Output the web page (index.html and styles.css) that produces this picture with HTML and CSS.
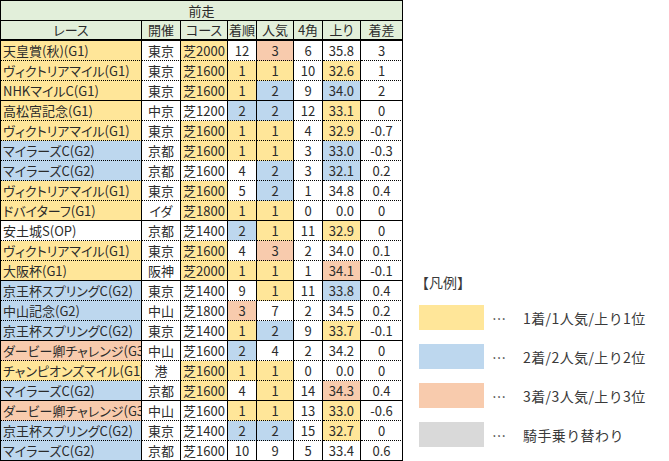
FILE: index.html
```html
<!DOCTYPE html>
<html lang="ja">
<head>
<meta charset="utf-8">
<title>前走</title>
<link rel="stylesheet" href="styles.css">
</head>
<body>
<div class="tbl">
  <div class="hrow1"><div class="cell">前走</div></div>
  <div class="row hrow2">
    <div class="cell">レース</div><div class="cell">開催</div><div class="cell">コース</div><div class="cell">着順</div><div class="cell">人気</div><div class="cell">4角</div><div class="cell">上り</div><div class="cell">着差</div>
  </div>

  <div class="row"><div class="cell race y">天皇賞(秋)(G1)</div><div class="cell">東京</div><div class="cell course y">芝2000</div><div class="cell">12</div><div class="cell o">3</div><div class="cell">6</div><div class="cell agari">35.8</div><div class="cell">3</div></div>
  <div class="row"><div class="cell race y">ヴィクトリアマイル(G1)</div><div class="cell">東京</div><div class="cell course y">芝1600</div><div class="cell y">1</div><div class="cell y">1</div><div class="cell">10</div><div class="cell agari y">32.6</div><div class="cell">1</div></div>
  <div class="row end"><div class="cell race y">NHKマイルC(G1)</div><div class="cell">東京</div><div class="cell course y">芝1600</div><div class="cell y">1</div><div class="cell b">2</div><div class="cell">9</div><div class="cell agari b">34.0</div><div class="cell">2</div></div>

  <div class="row"><div class="cell race y">高松宮記念(G1)</div><div class="cell">中京</div><div class="cell course">芝1200</div><div class="cell b">2</div><div class="cell b">2</div><div class="cell">12</div><div class="cell agari y">33.1</div><div class="cell">0</div></div>
  <div class="row"><div class="cell race y">ヴィクトリアマイル(G1)</div><div class="cell">東京</div><div class="cell course y">芝1600</div><div class="cell y">1</div><div class="cell y">1</div><div class="cell">4</div><div class="cell agari y">32.9</div><div class="cell">-0.7</div></div>
  <div class="row"><div class="cell race b">マイラーズC(G2)</div><div class="cell">京都</div><div class="cell course y">芝1600</div><div class="cell y">1</div><div class="cell y">1</div><div class="cell">3</div><div class="cell agari b">33.0</div><div class="cell">-0.3</div></div>
  <div class="row"><div class="cell race b">マイラーズC(G2)</div><div class="cell">京都</div><div class="cell course">芝1600</div><div class="cell">4</div><div class="cell b">2</div><div class="cell">3</div><div class="cell agari b">32.1</div><div class="cell">0.2</div></div>
  <div class="row"><div class="cell race y">ヴィクトリアマイル(G1)</div><div class="cell">東京</div><div class="cell course y">芝1600</div><div class="cell">5</div><div class="cell b">2</div><div class="cell">1</div><div class="cell agari">34.8</div><div class="cell">0.4</div></div>
  <div class="row end"><div class="cell race y">ドバイターフ(G1)</div><div class="cell">イダ</div><div class="cell course y">芝1800</div><div class="cell y">1</div><div class="cell y">1</div><div class="cell">0</div><div class="cell agari">0.0</div><div class="cell">0</div></div>

  <div class="row"><div class="cell race">安土城S(OP)</div><div class="cell">京都</div><div class="cell course">芝1400</div><div class="cell b">2</div><div class="cell y">1</div><div class="cell">11</div><div class="cell agari y">32.9</div><div class="cell">0</div></div>
  <div class="row"><div class="cell race y">ヴィクトリアマイル(G1)</div><div class="cell">東京</div><div class="cell course y">芝1600</div><div class="cell">4</div><div class="cell o">3</div><div class="cell">2</div><div class="cell agari">34.0</div><div class="cell">0.1</div></div>
  <div class="row end"><div class="cell race y">大阪杯(G1)</div><div class="cell">阪神</div><div class="cell course y">芝2000</div><div class="cell y">1</div><div class="cell y">1</div><div class="cell">1</div><div class="cell agari o">34.1</div><div class="cell">-0.1</div></div>

  <div class="row"><div class="cell race b">京王杯スプリングC(G2)</div><div class="cell">東京</div><div class="cell course">芝1400</div><div class="cell">9</div><div class="cell y">1</div><div class="cell">11</div><div class="cell agari b">33.8</div><div class="cell">0.4</div></div>
  <div class="row"><div class="cell race b">中山記念(G2)</div><div class="cell">中山</div><div class="cell course">芝1800</div><div class="cell o">3</div><div class="cell">7</div><div class="cell">2</div><div class="cell agari">34.5</div><div class="cell">0.2</div></div>
  <div class="row end"><div class="cell race b">京王杯スプリングC(G2)</div><div class="cell">東京</div><div class="cell course">芝1400</div><div class="cell y">1</div><div class="cell b">2</div><div class="cell">9</div><div class="cell agari y">33.7</div><div class="cell">-0.1</div></div>

  <div class="row"><div class="cell race o">ダービー卿チャレンジ(G3)</div><div class="cell">中山</div><div class="cell course">芝1600</div><div class="cell b">2</div><div class="cell">4</div><div class="cell">2</div><div class="cell agari">34.2</div><div class="cell">0</div></div>
  <div class="row"><div class="cell race y">チャンピオンズマイル(G1)</div><div class="cell">港</div><div class="cell course y">芝1600</div><div class="cell y">1</div><div class="cell y">1</div><div class="cell">0</div><div class="cell agari">0.0</div><div class="cell">0</div></div>
  <div class="row end"><div class="cell race b">マイラーズC(G2)</div><div class="cell">京都</div><div class="cell course y">芝1600</div><div class="cell">4</div><div class="cell y">1</div><div class="cell">14</div><div class="cell agari o">34.3</div><div class="cell">0.4</div></div>

  <div class="row"><div class="cell race o">ダービー卿チャレンジ(G3)</div><div class="cell">中山</div><div class="cell course">芝1600</div><div class="cell y">1</div><div class="cell y">1</div><div class="cell">13</div><div class="cell agari y">33.0</div><div class="cell">-0.6</div></div>
  <div class="row"><div class="cell race b">京王杯スプリングC(G2)</div><div class="cell">東京</div><div class="cell course">芝1400</div><div class="cell b">2</div><div class="cell b">2</div><div class="cell">15</div><div class="cell agari y">32.7</div><div class="cell">0</div></div>
  <div class="row end"><div class="cell race b">マイラーズC(G2)</div><div class="cell">京都</div><div class="cell course">芝1600</div><div class="cell">10</div><div class="cell">9</div><div class="cell">5</div><div class="cell agari">33.4</div><div class="cell">0.6</div></div>
</div>

<div class="legend">
  <div class="legend-title">【凡例】</div>
  <div class="item"><span class="swatch y"></span><span class="dots">…</span><span class="label">1着/1人気/上り1位</span></div>
  <div class="item"><span class="swatch b"></span><span class="dots">…</span><span class="label">2着/2人気/上り2位</span></div>
  <div class="item"><span class="swatch o"></span><span class="dots">…</span><span class="label">3着/3人気/上り3位</span></div>
  <div class="item"><span class="swatch g"></span><span class="dots">…</span><span class="label">騎手乗り替わり</span></div>
</div>
</body>
</html>
```
FILE: styles.css
```css
html, body {
  margin: 0;
  padding: 0;
  background: #ffffff;
}

body {
  display: flex;
  align-items: flex-start;
  font-family: "Noto Sans CJK JP", sans-serif;
  color: #2b2b2b;
}

.tbl {
  width: 403px;
  box-sizing: border-box;
  border-left: 1px solid #000;
  border-top: 1px solid #000;
  font-size: 13px;
  font-feature-settings: "palt";
}

.row {
  display: grid;
  grid-template-columns: 141px 39px 47px 29px 37px 29px 38px 42px;
}

.cell {
  box-sizing: border-box;
  height: 20px;
  line-height: 19px;
  border-right: 1px solid #000;
  border-bottom: 1px dotted #000;
  text-align: center;
  white-space: nowrap;
  overflow: hidden;
  background: #ffffff;
}

.row.end .cell {
  border-bottom: 1px solid #000;
}

.hrow1 .cell {
  border-bottom: 1px solid #000;
  background: #e2efda;
}

.hrow2 .cell {
  border-bottom: 2px solid #000;
  line-height: 18px;
  background: #e2efda;
}

.cell.race {
  text-align: left;
  padding-left: 2px;
}

.cell.course {
  text-align: left;
  padding-left: 2px;
}

.cell.agari {
  text-align: right;
  padding-right: 6px;
}

.hrow2 .cell {
  text-align: center;
  padding: 0;
}

.y { background: #ffe699; }
.b { background: #bdd7ee; }
.o { background: #f8cbad; }
.g { background: #d9d9d9; }

.cell.y { background: #ffe699; }
.cell.b { background: #bdd7ee; }
.cell.o { background: #f8cbad; }

.legend {
  margin-left: 16px;
  padding-top: 272px;
  font-size: 14px;
  color: #3a3a3a;
}

.legend-title {
  height: 20px;
  line-height: 20px;
  margin-left: -4px;
  margin-bottom: 13px;
}

.item {
  display: flex;
  align-items: center;
  height: 25px;
  margin-bottom: 14px;
}

.swatch {
  display: block;
  width: 65px;
  height: 25px;
}

.dots {
  display: block;
  width: 14px;
  margin-left: 8px;
  line-height: 20px;
}

.label {
  display: block;
  margin-left: 17px;
  line-height: 20px;
  white-space: nowrap;
  letter-spacing: 0.4px;
}
```
